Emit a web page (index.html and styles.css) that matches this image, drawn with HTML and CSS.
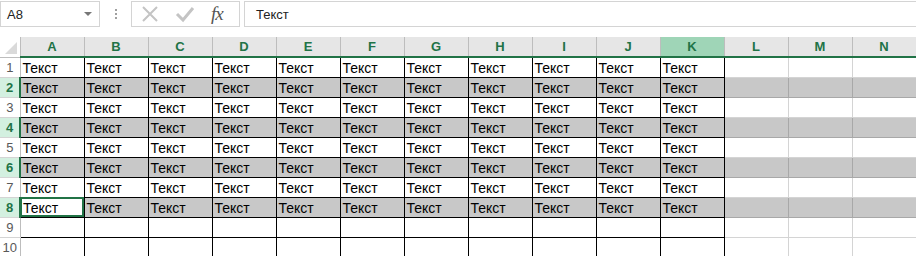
FILE: index.html
```html
<!DOCTYPE html>
<html lang="ru">
<head>
  <meta charset="UTF-8">
  <title>Книга1</title>
  <link rel="stylesheet" href="styles.css">
</head>
<body>
  <div class="formula-bar">
    <div class="name-box">
      <span>A8</span>
      <span class="drop"></span>
    </div>
    <div class="grip"><span></span><span></span><span></span></div>
    <div class="fx-buttons">
      <svg class="ico" width="20" height="20" viewBox="0 0 20 20">
        <path d="M3 3 L17 17 M17 3 L3 17" stroke="#c4c4c4" stroke-width="2" fill="none"/>
      </svg>
      <svg class="ico" width="20" height="20" viewBox="0 0 20 20">
        <path d="M2 10 L8 16 L18 4" stroke="#c4c4c4" stroke-width="3" fill="none"/>
      </svg>
      <span class="fx">fx</span>
    </div>
    <div class="formula-input">Текст</div>
  </div>

  <table class="sheet">
    <colgroup>
      <col class="c-head">
      <col span="14" class="c-cell">
    </colgroup>
    <thead>
      <tr>
        <th class="corner"><span class="tri"></span></th>
        <th>A</th><th>B</th><th>C</th><th>D</th><th>E</th><th>F</th><th>G</th>
        <th>H</th><th>I</th><th>J</th><th class="sel">K</th><th>L</th><th>M</th><th>N</th>
      </tr>
    </thead>
    <tbody id="rows"></tbody>
  </table>

  <script>
    var body = document.getElementById('rows');
    for (var r = 1; r <= 10; r++) {
      var tr = document.createElement('tr');
      if (r % 2 === 0 && r <= 8) tr.className = 'band';
      var th = document.createElement('th');
      th.textContent = r;
      tr.appendChild(th);
      for (var c = 0; c < 14; c++) {
        var td = document.createElement('td');
        if (c < 11) {
          td.className = 'box';
          if (r <= 8) td.textContent = 'Текст';
        }
        if (r === 8 && c === 0) td.className += ' active';
        tr.appendChild(td);
      }
      body.appendChild(tr);
    }
  </script>
</body>
</html>
```

FILE: styles.css
```css
body {
  margin: 0;
  background: #fff;
  font-family: "Liberation Sans", Arial, sans-serif;
  overflow: hidden;
}

.formula-bar {
  display: flex;
  align-items: stretch;
  height: 26px;
  padding-top: 1px;
  margin-bottom: 10px;
}

.name-box {
  width: 100px;
  box-sizing: border-box;
  border: 1px solid #d4d4d4;
  display: flex;
  align-items: center;
  justify-content: space-between;
  padding: 0 7px 0 6px;
  font-size: 13px;
  color: #222;
}

.drop {
  width: 0;
  height: 0;
  border-left: 4px solid transparent;
  border-right: 4px solid transparent;
  border-top: 4px solid #777;
}

.grip {
  width: 31px;
  display: flex;
  flex-direction: column;
  align-items: center;
  justify-content: center;
  gap: 2px;
}

.grip span {
  width: 2px;
  height: 2px;
  background: #a0a0a0;
}

.fx-buttons {
  width: 109px;
  box-sizing: border-box;
  border: 1px solid #d4d4d4;
  display: flex;
  align-items: center;
  padding-left: 8px;
  gap: 15px;
}

.fx {
  font-family: "Liberation Serif", "DejaVu Serif", serif;
  font-style: italic;
  font-size: 19px;
  color: #555;
  margin-left: 1px;
  letter-spacing: -1px;
}

.formula-input {
  flex: 1;
  margin-left: 4px;
  box-sizing: border-box;
  border: 1px solid #d4d4d4;
  border-right: none;
  display: flex;
  align-items: center;
  padding-left: 11px;
  font-size: 13px;
  color: #222;
}

.sheet {
  border-collapse: collapse;
  table-layout: fixed;
  width: 916px;
}

.c-head { width: 20px; }
.c-cell { width: 64px; }

.sheet tr {
  height: 20px;
}

.sheet th,
.sheet td {
  padding: 0;
  overflow: hidden;
  white-space: nowrap;
}

.sheet thead th {
  background: #e6e6e6;
  border-right: 1px solid #bdbdbd;
  border-bottom: 2px solid #217346;
  color: #217346;
  font-family: "Liberation Sans", Arial, sans-serif;
  font-weight: bold;
  font-size: 13px;
  text-align: center;
}

.sheet thead th.sel {
  background: #9fd5b7;
}

.sheet thead th.corner {
  background: #fff;
  border-bottom: 1px solid #bdbdbd;
  position: relative;
}

.tri {
  position: absolute;
  right: 3px;
  bottom: 3px;
  width: 0;
  height: 0;
  border-left: 12px solid transparent;
  border-bottom: 12px solid #dadada;
}

.sheet tbody th {
  background: #fff;
  border-right: 1px solid #bdbdbd;
  border-bottom: 1px solid #d4d4d4;
  color: #595959;
  font-weight: normal;
  font-size: 13px;
  text-align: center;
}

.sheet tbody tr.band th {
  background: #d3f0e0;
  color: #217346;
  font-weight: bold;
  border-right: 2px solid #217346;
}

.sheet td {
  border-right: 1px solid #d4d4d4;
  border-bottom: 1px solid #d4d4d4;
  font-size: 14px;
  color: #000;
  padding: 1px 0 0 2px;
}

.sheet tr.band td {
  background: #c8c8c8;
  border-right-color: #a8a8a8;
  border-bottom-color: #a8a8a8;
  border-top: 1px solid #a8a8a8;
}

.sheet td.box,
.sheet tr.band td.box {
  border: 1px solid #000;
}

.sheet tr.band td.active {
  outline: 2px solid #217346;
  outline-offset: -2px;
  background: #fff;
}
```
